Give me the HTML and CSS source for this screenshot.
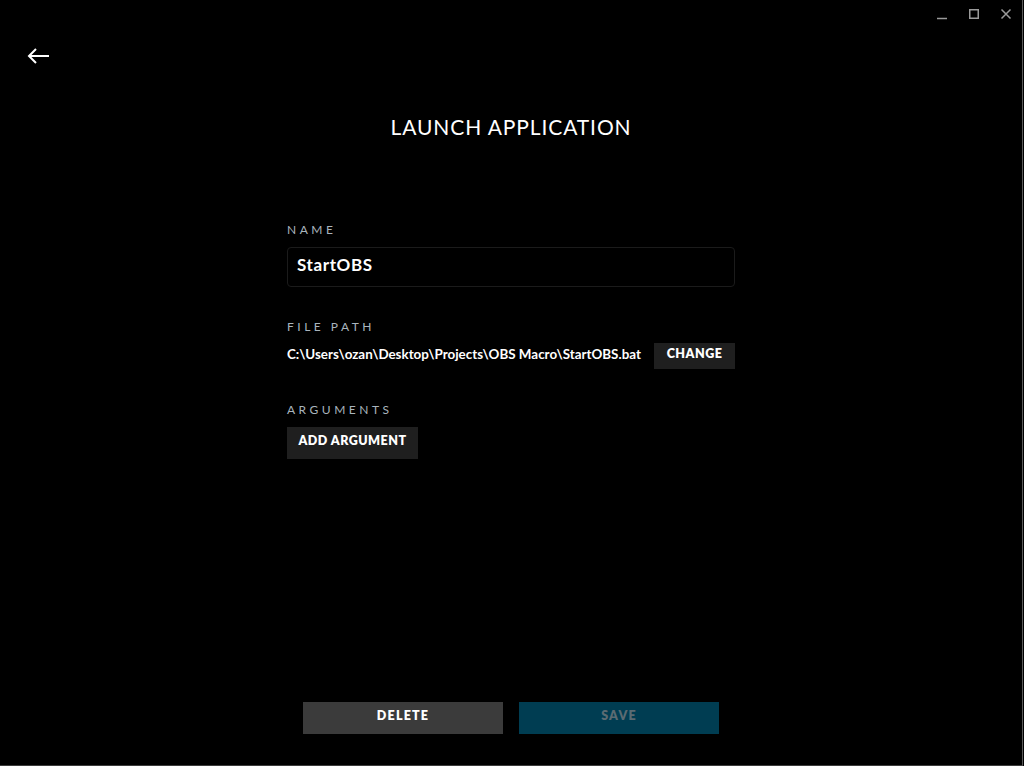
FILE: index.html
```html
<!DOCTYPE html>
<html>
<head>
<meta charset="utf-8">
<link rel="stylesheet" href="styles.css">
</head>
<body>
<div class="window">
  <div class="titlebar">
    <div class="winctl">
      <svg class="ctl" width="12" height="12" viewBox="0 0 12 12"><path d="M1 10.5h10" stroke="#9a9a9a" stroke-width="1.5"/></svg>
      <svg class="ctl" width="12" height="12" viewBox="0 0 12 12"><rect x="1.75" y="1.75" width="8.5" height="8.5" fill="none" stroke="#9a9a9a" stroke-width="1.5"/></svg>
      <svg class="ctl" width="12" height="12" viewBox="0 0 12 12"><path d="M1.5 1.5l9 9M10.5 1.5l-9 9" stroke="#9a9a9a" stroke-width="1.5"/></svg>
    </div>
  </div>
  <div class="backrow">
    <svg class="back" width="24" height="16" viewBox="0 0 24 16"><path d="M22 8H2M9 1L2 8l7 7" fill="none" stroke="#fff" stroke-width="2"/></svg>
  </div>
  <h1 class="title">LAUNCH APPLICATION</h1>
  <div class="form">
    <div class="label">NAME</div>
    <div class="input">StartOBS</div>
    <div class="label label-path">FILE PATH</div>
    <div class="pathrow">
      <span class="path">C:\Users\ozan\Desktop\Projects\OBS Macro\StartOBS.bat</span>
      <button class="btn btn-change">CHANGE</button>
    </div>
    <div class="label label-args">ARGUMENTS</div>
    <button class="btn btn-add">ADD ARGUMENT</button>
  </div>
  <div class="spacer"></div>
  <div class="actions">
    <button class="act act-delete">DELETE</button>
    <button class="act act-save">SAVE</button>
  </div>
</div>
</body>
</html>
```
FILE: styles.css
```css
html, body {
  margin: 0;
  padding: 0;
  background: #000;
  overflow: hidden;
}
body {
  width: 1024px;
  height: 766px;
  font-family: "Lato", "Noto Sans", sans-serif;
  color: #fff;
}
.window {
  width: 1022px;
  height: 765px;
  border-right: 1px solid #5a5a5a;
  border-bottom: 1px solid #3c3c3c;
  display: flex;
  flex-direction: column;
  background: #000;
}
.titlebar {
  height: 30px;
  display: flex;
  justify-content: flex-end;
}
.winctl {
  display: flex;
  gap: 20px;
  padding: 8px 10px 0 0;
  align-items: flex-start;
}
.ctl { display: block; }
.backrow {
  height: 40px;
  padding-left: 27px;
  display: flex;
  align-items: center;
  margin-top: 6px;
}
.back { display: block; }
.title {
  margin: 39px 0 0;
  text-align: center;
  font-size: 21px;
  font-weight: 400;
  letter-spacing: 0.9px;
  line-height: 24px;
}
.form {
  width: 448px;
  margin: 84px auto 0;
  display: flex;
  flex-direction: column;
  align-items: flex-start;
}
.label {
  font-size: 12px;
  letter-spacing: 3.5px;
  color: #a9b4bd;
  line-height: 14px;
}
.input {
  margin-top: 10px;
  box-sizing: border-box;
  width: 448px;
  height: 40px;
  border: 1px solid #1b1b1b;
  border-radius: 4px;
  padding: 0 9px 5px;
  display: flex;
  align-items: center;
  font-weight: 700;
  font-size: 17px;
  letter-spacing: 0.6px;
}
.label-path { margin-top: 33px; }
.pathrow {
  margin-top: 9px;
  width: 448px;
  display: flex;
  justify-content: space-between;
  align-items: center;
}
.path {
  font-size: 13.4px;
  font-weight: 700;
  margin-bottom: 4px;
}
.btn {
  font-family: inherit;
  border: none;
  background: #1f1f1f;
  color: #fff;
  font-weight: 800;
  font-size: 12.5px;
  letter-spacing: 0.5px;
  padding: 0 0 5px;
  cursor: pointer;
}
.btn-change {
  width: 81px;
  height: 26px;
}
.label-args { margin-top: 34px; }
.btn-add {
  margin-top: 10px;
  width: 131px;
  height: 32px;
}
.spacer { flex: 1; }
.actions {
  display: flex;
  justify-content: center;
  gap: 16px;
  margin-bottom: 31px;
}
.act {
  width: 200px;
  height: 32px;
  border: none;
  padding: 0 0 5px;
  font-family: inherit;
  font-size: 12.5px;
  font-weight: 800;
  letter-spacing: 1.2px;
}
.act-delete {
  background: #3b3b3b;
  color: #fff;
}
.act-save {
  background: #003d52;
  color: #5b6b72;
}
```
